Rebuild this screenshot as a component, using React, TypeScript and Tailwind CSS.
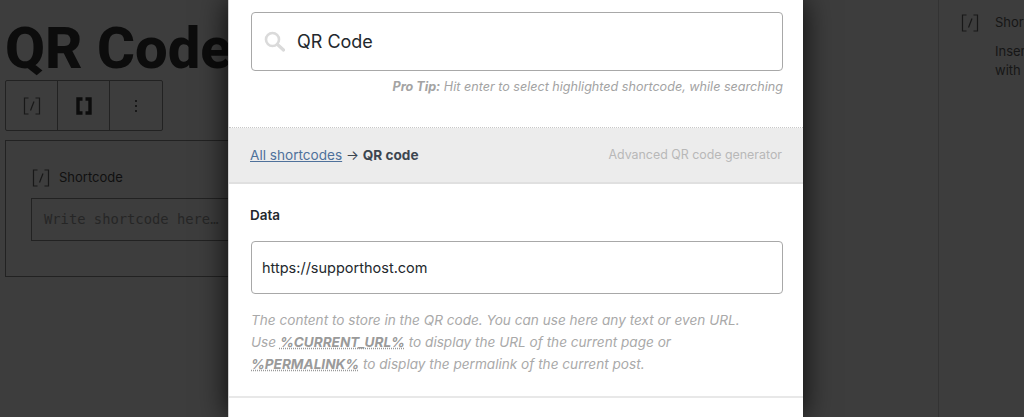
const ui = "font-['Inter','Liberation_Sans',sans-serif]"

function SlashIcon({ className }: { className: string }) {
  return (
    <svg viewBox="0 0 20 20" fill="none" stroke="currentColor" strokeWidth="1.2" className={className}>
      <path d="M6.5 2H2.5V18H6.5" />
      <path d="M13.5 2H17.5V18H13.5" />
      <path d="M12 5.5L8.5 14.5" />
    </svg>
  )
}

function BracketIcon() {
  return (
    <svg viewBox="0 0 20 20" fill="none" stroke="currentColor" strokeWidth="3.4" className="w-[20px] h-[20px] text-[#0c0c0c]">
      <path d="M8.5 3H4V17H8.5" />
      <path d="M11.5 3H16V17H11.5" />
    </svg>
  )
}

function SearchIcon() {
  return (
    <svg viewBox="0 0 21 21" fill="none" stroke="#dadada" className="w-[21px] h-[21px] shrink-0">
      <circle cx="8.5" cy="8.5" r="6.5" strokeWidth="2.6" />
      <path d="M13.5 13.5L19.5 19" strokeWidth="3.2" strokeLinecap="round" />
    </svg>
  )
}

function LeftEditor() {
  return (
    <div className="w-[228px] shrink-0 overflow-hidden pl-[5px]">
      <h1 className="font-['Roboto',sans-serif] font-extrabold text-[58px] leading-[56px] text-[#0c0c0c] whitespace-nowrap mt-[20px] h-[60px]">
        QR Code
      </h1>
      <div className="flex w-[158px] h-[51px] border border-[#222222] rounded-[2px]">
        <div className="w-[52px] flex items-center justify-center border-r border-[#222222]">
          <SlashIcon className="w-[20px] h-[20px] text-[#181818]" />
        </div>
        <div className="w-[52px] flex items-center justify-center border-r border-[#222222]">
          <BracketIcon />
        </div>
        <div className="flex-1 flex flex-col items-center justify-center gap-[3px]">
          <span className="w-[2px] h-[2px] bg-[#181818]" />
          <span className="w-[2px] h-[2px] bg-[#181818]" />
          <span className="w-[2px] h-[2px] bg-[#181818]" />
        </div>
      </div>
      <div className="w-[300px] h-[137px] mt-[9px] border border-[#222222] pl-[25px] pt-[26px]">
        <div className="flex items-center gap-[8px] h-[22px]">
          <SlashIcon className="w-[20px] h-[20px] text-[#181818]" />
          <span className={`${ui} text-[13px] text-[#101010]`}>Shortcode</span>
        </div>
        <div className="mt-[9px] h-[43px] border border-[#222222] flex items-center pl-[12px]">
          <span className="font-['DejaVu_Sans_Mono',monospace] text-[13.8px] text-[#262626] whitespace-nowrap">
            Write shortcode here…
          </span>
        </div>
      </div>
    </div>
  )
}

function Modal() {
  return (
    <div className={`${ui} w-[575px] shrink-0 h-[417px] bg-white border-l border-[#cfcfcf] shadow-[0_0_28px_rgba(0,0,0,0.85)] z-10 relative`}>
      <div className="h-[128px] pt-[12px] pl-[22px] pr-[20px] border-b border-dotted border-[#c8c8c8]">
        <div className="h-[59px] border border-[#a8a8a8] rounded-[4px] flex items-center pl-[12px] gap-[12px]">
          <SearchIcon />
          <span className="text-[18px] text-[#23282d]">QR Code</span>
        </div>
        <p className="mt-[7px] text-right text-[12.6px] italic text-[#a3a3a3] whitespace-nowrap">
          <b>Pro Tip:</b> Hit enter to select highlighted shortcode, while searching
        </p>
      </div>
      <div className="h-[56px] pt-[1px] bg-[#ececec] border-b-2 border-[#e0e0e0] flex items-center justify-between pl-[21px] pr-[21px]">
        <div className="text-[13.6px] text-[#3c4650]">
          <span className="text-[#4f719b] underline">All shortcodes</span> → <b>QR code</b>
        </div>
        <span className="text-[12.4px] text-[#b8b8b8]">Advanced QR code generator</span>
      </div>
      <div className="h-[214px] pt-[23px] pl-[21px] pr-[20px] border-b-2 border-[#e8e8e8]">
        <div className="text-[13.5px] font-semibold text-[#23282d] leading-[16px]">Data</div>
        <div className="mt-[18px] ml-[1px] h-[53px] border border-[#a8a8a8] rounded-[4px] flex items-center pl-[10px]">
          <span className="text-[14.5px] text-[#23282d]">https://supporthost.com</span>
        </div>
        <p className="mt-[15px] ml-[1px] text-[13.6px] leading-[22px] italic text-[#a9a9a9] whitespace-nowrap">
          The content to store in the QR code. You can use here any text or even URL.
          <br />
          Use <b className="underline decoration-dotted text-[#9a9a9a]">%CURRENT_URL%</b> to display the URL of the current page or
          <br />
          <b className="underline decoration-dotted text-[#9a9a9a]">%PERMALINK%</b> to display the permalink of the current post.
        </p>
      </div>
    </div>
  )
}

function RightSidebar() {
  return (
    <div className="flex-1 flex justify-end overflow-hidden">
      <div className={`${ui} w-[86px] shrink-0 overflow-hidden border-l border-[#333333] pl-[21px] pt-[13px]`}>
        <div className="flex items-center gap-[15px] whitespace-nowrap">
          <SlashIcon className="w-[20px] h-[20px] shrink-0 text-[#181818]" />
          <span className="text-[13px] text-[#161616]">Shortcode</span>
        </div>
        <p className="mt-[9px] ml-[35px] text-[13px] leading-[19px] text-[#161616] whitespace-nowrap">
          Insert
          <br />
          with
        </p>
      </div>
    </div>
  )
}

export default function App() {
  return (
    <div className="flex w-[1024px] h-[417px] overflow-hidden bg-[#3d3d3d]">
      <LeftEditor />
      <Modal />
      <RightSidebar />
    </div>
  )
}
